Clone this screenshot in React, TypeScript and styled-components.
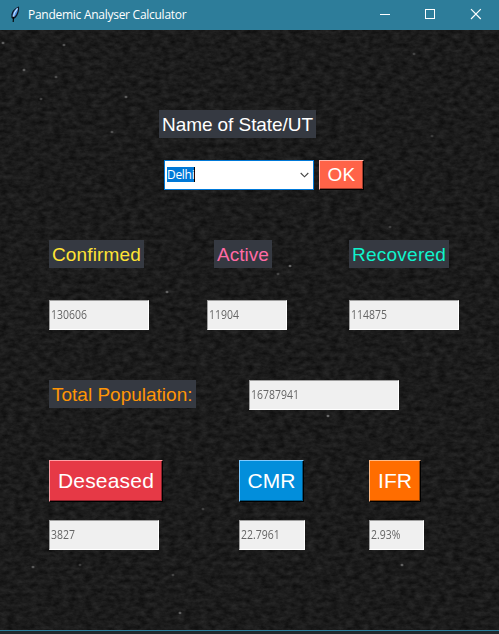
import React from "react";
import styled, { createGlobalStyle } from "styled-components";

const GlobalStyle = createGlobalStyle`
  body { margin: 0; background: #1b1b1b; overflow: hidden; }
  *, *::before, *::after { box-sizing: border-box; }
`;

const Window = styled.div`
  width: 499px;
  height: 634px;
  display: flex;
  flex-direction: column;
  background: #1b1b1b;
  overflow: hidden;
`;

const TitleBar = styled.header`
  height: 30px;
  flex: none;
  display: flex;
  align-items: center;
  padding-left: 8px;
  background: #2d7d9a;
  color: #fff;
  font: 12px "Open Sans", "Noto Sans", sans-serif;
`;

const TitleText = styled.span`
  margin-left: 4px;
  flex: 1;
  line-height: 30px;
  white-space: nowrap;
  letter-spacing: -0.27px;
`;

const WindowControls = styled.div`
  display: flex;
  svg { display: block; width: 46px; height: 30px; }
`;

const Body = styled.main`
  position: relative;
  height: 600px;
  flex: none;
  padding: 80px 0 0 49px;
  isolation: isolate;
`;

const Texture = styled.svg`
  position: absolute;
  inset: 0;
  z-index: -1;
  width: 499px;
  height: 600px;
`;

const Row = styled.div<{ $height: number; $after: number; $indent?: number }>`
  display: flex;
  align-items: flex-start;
  height: ${(p) => p.$height}px;
  margin-bottom: ${(p) => p.$after}px;
  padding-left: ${(p) => p.$indent ?? 0}px;
`;

const Label = styled.label<{ $color: string; $width: number; $gap?: number; $spacing?: number }>`
  width: ${(p) => p.$width}px;
  height: 28px;
  margin-right: ${(p) => p.$gap ?? 0}px;
  padding-left: 3px;
  flex: none;
  background: #353941;
  color: ${(p) => p.$color};
  font: 19px/29px "Liberation Sans", Arial, sans-serif;
  letter-spacing: ${(p) => p.$spacing ?? 0}px;
  white-space: nowrap;
`;

const Entry = styled.output<{ $width: number; $gap?: number }>`
  display: flex;
  align-items: center;
  width: ${(p) => p.$width}px;
  height: 30px;
  margin-right: ${(p) => p.$gap ?? 0}px;
  padding-left: 1px;
  flex: none;
  border: 1px solid;
  border-color: #a0a0a0 #fff #fff #a0a0a0;
  background: #f0f0f0;
  color: #656565;
  font: 12px/28px "Open Sans", "Noto Sans", sans-serif;
`;

const Digits = styled.span`
  display: block;
  transform: scaleX(0.872);
  transform-origin: left;
`;

const Combo = styled.div`
  display: flex;
  align-items: center;
  justify-content: space-between;
  width: 150px;
  height: 30px;
  margin-right: 5px;
  padding: 0 4px 0 2px;
  flex: none;
  border: 1px solid #0078d7;
  background: #fff;
`;

const Selection = styled.span`
  width: 28px;
  height: 15px;
  margin-top: -1px;
  background: #0078d7;
  border-right: 1px solid #000;
  color: #fff;
  font: 12px/16px "Open Sans", "Noto Sans", sans-serif;
  letter-spacing: -0.3px;
  white-space: nowrap;
`;

const Button = styled.button<{
  $bg: string; $light: string; $shade: string;
  $width: number; $height: number; $size: number; $gap?: number; $spacing?: number;
}>`
  width: ${(p) => p.$width}px;
  height: ${(p) => p.$height}px;
  margin: 0 ${(p) => p.$gap ?? 0}px 0 0;
  padding: 0;
  flex: none;
  border: 1px solid;
  border-color: ${(p) => p.$light} #000 #000 ${(p) => p.$light};
  box-shadow: inset -1px -1px ${(p) => p.$shade};
  background: ${(p) => p.$bg};
  color: #fff;
  font: ${(p) => p.$size}px/${(p) => p.$height - 2}px "Liberation Sans", Arial, sans-serif;
  letter-spacing: ${(p) => p.$spacing ?? 0}px;
`;

const BottomEdge = styled.footer`
  height: 4px;
  flex: none;
  border-top: 1px solid #2d7d9a;
  background: #20272b;
`;

const specks: [number, number, number][] = [
  [3, 13, 0.34], [64, 15, 0.3], [24, 40, 0.34], [56, 47, 0.25], [126, 67, 0.3],
  [41, 69, 0.22], [112, 102, 0.25], [290, 236, 0.4], [278, 244, 0.22], [167, 262, 0.35],
  [143, 229, 0.2], [328, 386, 0.4], [402, 535, 0.35], [33, 537, 0.3], [173, 545, 0.22],
  [180, 583, 0.35], [203, 479, 0.2], [390, 197, 0.2], [414, 24, 0.2],
  [258, 377, 0.2], [432, 106, 0.16], [80, 535, 0.2],
];

const Backdrop = () => (
  <Texture viewBox="0 0 499 600" aria-hidden="true">
    <defs>
      <filter id="rough" x="0" y="0" width="100%" height="100%" colorInterpolationFilters="sRGB">
        <feTurbulence type="fractalNoise" baseFrequency="0.13 0.22" numOctaves="4" seed="12" />
        <feColorMatrix
          values="0.14 0 0 0 0.037
                  0.14 0 0 0 0.037
                  0.14 0 0 0 0.037
                  0 0 0 0 1"
        />
      </filter>
    </defs>
    <rect width="499" height="600" filter="url(#rough)" />
    {specks.map(([x, y, o]) => (
      <ellipse key={`${x}-${y}`} cx={x} cy={y} rx="1.5" ry="1.3" fill="#ddd" opacity={o} />
    ))}
  </Texture>
);

const Feather = () => (
  <svg width="16" height="18" viewBox="0 0 16 18" aria-hidden="true">
    <path d="M10.9 0.4 C7.6 1.4 4 4.6 3.4 8.6 L3.5 12 L5.6 13.2 C8.9 11.3 10.3 8 10.8 5 C11.1 3 11.2 1.4 10.9 .4Z" fill="#0d1420" />
    <path d="M10.1 1.6 C7.4 3 4.8 6 4.4 9.7 L5.2 11.8 C7.9 10 9.1 7.5 9.6 5.1Z" fill="#4f8fe0" />
    <path d="M9.5 2.4 C7.4 4.6 5.9 7.4 5.3 11" fill="none" stroke="#c4e2ff" strokeWidth="1.2" />
    <path d="M5.5 10.8 L5.2 16" stroke="#050505" strokeWidth="1.1" />
  </svg>
);

export default function App() {
  return (
    <>
      <GlobalStyle />
      <Window>
        <TitleBar>
          <Feather />
          <TitleText>Pandemic Analyser Calculator</TitleText>
          <WindowControls>
            <svg viewBox="0 0 46 30"><path d="M19 14.5H29" stroke="#fff" /></svg>
            <svg viewBox="0 0 46 30"><rect x="18.5" y="9.5" width="9" height="9" fill="none" stroke="#fff" /></svg>
            <svg viewBox="0 0 46 30"><path d="M18 9.2L27.8 19M27.8 9.2L18 19" stroke="#fff" strokeWidth="1.2" /></svg>
          </WindowControls>
        </TitleBar>
        <Body>
          <Backdrop />
          <Row $height={28} $after={22} $indent={110}>
            <Label $color="#fff" $width={157} $spacing={-0.07}>Name of State/UT</Label>
          </Row>
          <Row $height={30} $after={50} $indent={115}>
            <Combo>
              <Selection>Delhi</Selection>
              <svg width="9" height="6" viewBox="0 0 9 6"><path d="M.7 1L4.5 4.8L8.3 1" fill="none" stroke="#444" strokeWidth="1.1" /></svg>
            </Combo>
            <Button $bg="#ff6348" $light="#ffb8ac" $shade="#a03c2c" $width={45} $height={30} $size={19} $spacing={0.3}>OK</Button>
          </Row>
          <Row $height={28} $after={32}>
            <Label $color="#ffe335" $width={95} $gap={70} $spacing={0.15}>Confirmed</Label>
            <Label $color="#ff6ba5" $width={58} $gap={77}>Active</Label>
            <Label $color="#10f3cd" $width={100} $spacing={0.25}>Recovered</Label>
          </Row>
          <Row $height={30} $after={50}>
            <Entry $width={100} $gap={58}><Digits>130606</Digits></Entry>
            <Entry $width={80} $gap={62}><Digits>11904</Digits></Entry>
            <Entry $width={110}><Digits>114875</Digits></Entry>
          </Row>
          <Row $height={30} $after={50}>
            <Label $color="#ff9505" $width={147} $gap={53}>Total Population:</Label>
            <Entry $width={150}><Digits>16787941</Digits></Entry>
          </Row>
          <Row $height={42} $after={18}>
            <Button $bg="#e63946" $light="#ff9fa5" $shade="#8a222b" $width={114} $height={42} $size={21} $gap={76} $spacing={0.2}>Deseased</Button>
            <Button $bg="#028edb" $light="#7fcaff" $shade="#005684" $width={65} $height={42} $size={21} $gap={65}>CMR</Button>
            <Button $bg="#ff6d00" $light="#ffba86" $shade="#994200" $width={52} $height={42} $size={21}>IFR</Button>
          </Row>
          <Row $height={30} $after={0}>
            <Entry $width={110} $gap={80}><Digits>3827</Digits></Entry>
            <Entry $width={66} $gap={64}><Digits>22.7961</Digits></Entry>
            <Entry $width={55}><Digits>2.93%</Digits></Entry>
          </Row>
        </Body>
        <BottomEdge />
      </Window>
    </>
  );
}
